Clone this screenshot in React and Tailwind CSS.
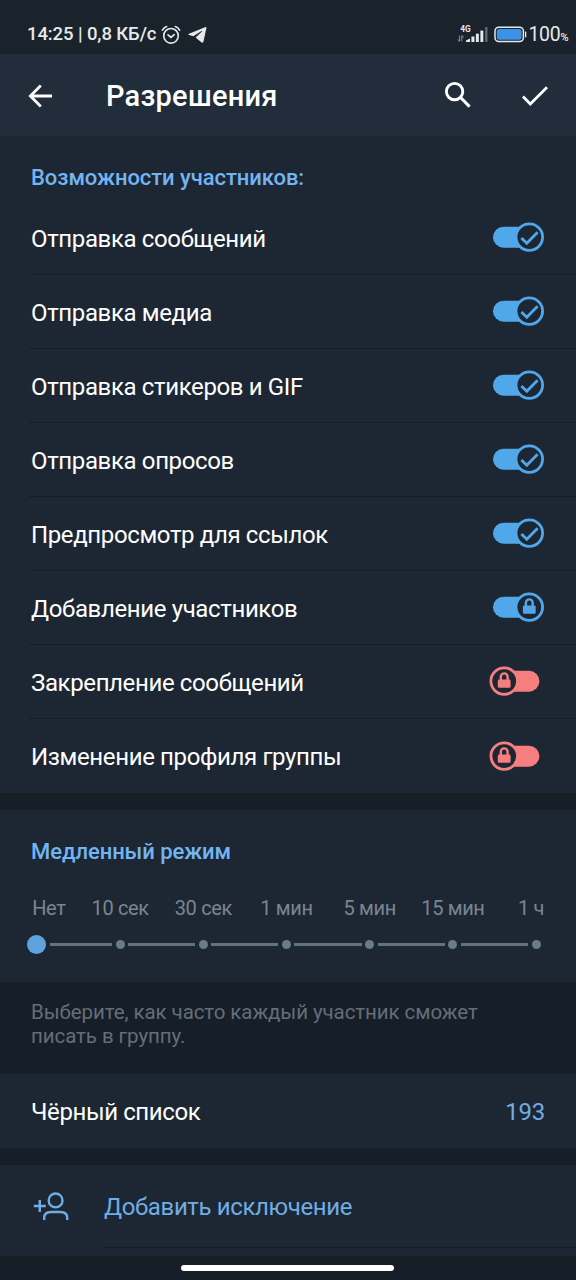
import { useState } from 'react'

const PERMISSIONS = [
  { id: 'messages', label: 'Отправка сообщений', on: true },
  { id: 'media', label: 'Отправка медиа', on: true },
  { id: 'stickers', label: 'Отправка стикеров и GIF', on: true },
  { id: 'polls', label: 'Отправка опросов', on: true },
  { id: 'links', label: 'Предпросмотр для ссылок', on: true },
  { id: 'invite', label: 'Добавление участников', on: true, locked: true },
  { id: 'pin', label: 'Закрепление сообщений', on: false, locked: true },
  { id: 'profile', label: 'Изменение профиля группы', on: false, locked: true },
]

const DELAYS = ['Нет', '10 сек', '30 сек', '1 мин', '5 мин', '15 мин', '1 ч']

const StatusBar = () => (
  <div className="flex h-[54px] items-center bg-[#1a232c] pt-[15px] pr-[8px] pl-[27px] text-[#e6e9ec]">
    <span className="text-[18.5px] leading-none font-medium tracking-[-0.1px] whitespace-nowrap">14:25 | 0,8 КБ/с</span>
    <svg className="ml-[5px] shrink-0" width="20" height="20" viewBox="0 0 20 20" fill="none" stroke="currentColor" strokeWidth="1.6" strokeLinecap="round">
      <circle cx="10" cy="10.8" r="7.3" />
      <path d="M1.4 5.2C2.4 3.4 3.8 2.2 5.6 1.5M18.6 5.2C17.6 3.4 16.2 2.2 14.4 1.5" />
      <path d="M7 9.8l3 2.6 3.2-2.8" />
    </svg>
    <svg className="ml-[7px] shrink-0" width="19" height="18" viewBox="0 0 19 18" fill="currentColor">
      <path d="M17.6 1L1 7.7c-.8.4-.8.9 0 1.2l4.3 1.3 8.2-5.2c.5-.3.9 0 .5.4L7.6 11.5l5.7 4.7c1 .8 1.9.6 2.2-.6L18.4 2c.2-.9-.2-1.2-.8-1z" />
    </svg>
    <svg className="ml-auto shrink-0" width="32" height="20" viewBox="0 0 32 20">
      <text x="3.2" y="7.3" fill="currentColor" fontSize="8.5" fontWeight="700" textLength="10.4" lengthAdjust="spacingAndGlyphs">4G</text>
      <g fill="none" stroke="#7f868d" strokeWidth="1.1">
        <path d="M2.6 10.5v6M0.8 14.5l1.8 2M4.8 16.5v-6M4.8 10.5l1.8 2" />
      </g>
      <g fill="currentColor">
        <path d="M9 17v-1.6l4-1.9V17z" />
        <rect x="14.4" y="11.5" width="3" height="5.5" />
        <rect x="18.9" y="8.7" width="2.9" height="8.3" />
        <rect x="23.4" y="5.6" width="2.9" height="11.4" />
        <rect x="28.1" y="2" width="2.4" height="15" opacity="0.35" />
      </g>
    </svg>
    <svg className="ml-[5px] shrink-0" width="33" height="18" viewBox="0 0 33 18">
      <rect x="1" y="1.2" width="28.4" height="14.4" rx="3.8" fill="none" stroke="currentColor" strokeWidth="1.5" />
      <rect x="2.8" y="3" width="24.8" height="10.8" rx="2.4" fill="#3a92e4" />
      <rect x="31" y="5.6" width="1.3" height="5.6" fill="currentColor" />
    </svg>
    <span className="ml-px flex items-baseline leading-none">
      <span className="text-[19.5px] tracking-[-0.3px]">100</span>
      <span className="text-[11px] font-medium tracking-[-0.5px]">%</span>
    </span>
  </div>
)

const Header = () => (
  <header className="flex h-[82px] items-center bg-[#212d3a] pr-[27px] pl-[27px] text-white">
    <svg className="mt-px shrink-0" width="26" height="26" viewBox="0 0 26 26" fill="none" stroke="currentColor" strokeWidth="2.8">
      <path d="M25 13H4M13.8 2.6L3.4 13l10.4 10.4" />
    </svg>
    <h1 className="mt-[2px] ml-[53px] text-[29px] leading-none font-medium tracking-[0.25px] whitespace-nowrap">Разрешения</h1>
    <svg className="ml-auto shrink-0" width="28" height="28" viewBox="0 0 28 28" fill="none" stroke="currentColor" strokeWidth="2.9">
      <circle cx="10.6" cy="10.6" r="8.2" />
      <path d="M16.4 16.4l9.2 9.2" />
    </svg>
    <svg className="mt-[2px] ml-[49px] shrink-0" width="28" height="22" viewBox="0 0 28 22" fill="none" stroke="currentColor" strokeWidth="2.8">
      <path d="M2 11.6l7.3 7.3L26 2.2" />
    </svg>
  </header>
)

const Lock = ({ cx }) => (
  <>
    <rect x={cx - 6.4} y="14.6" width="12.8" height="8.2" rx="1.4" fill="currentColor" />
    <path d={`M${cx - 3.4} 15v-3.2a3.4 3.4 0 0 1 6.8 0V15`} fill="none" stroke="currentColor" strokeWidth="2.4" />
  </>
)

const Toggle = ({ on, locked, label, onClick }) => {
  const cx = on ? 40.3 : 15.2
  return (
    <button
      role="switch"
      aria-checked={on}
      aria-label={label}
      onClick={onClick}
      className={`shrink-0 ${on ? 'text-[#50a8eb]' : 'text-[#f57f7f]'}`}
    >
      <svg className="block" width="56" height="32" viewBox="0 0 56 32">
        <rect x={on ? 4 : 9} y="5.7" width="41.4" height="21" rx="10.5" fill="currentColor" />
        <circle cx={cx} cy="16.1" r="13.3" fill="#1d2733" stroke="currentColor" strokeWidth="2.8" />
        {locked ? (
          <Lock cx={cx} />
        ) : (
          <path d="M32.4 17l5.4 5.2 10.8-11" fill="none" stroke="currentColor" strokeWidth="2.9" />
        )}
      </svg>
    </button>
  )
}

const SectionTitle = ({ children }) => (
  <h2 className="text-[22px] leading-[26px] font-medium tracking-[-0.07px] whitespace-nowrap text-[#72b5f2]">{children}</h2>
)

const DelaySlider = ({ value, onChange }) => (
  <>
    <div className="mt-[30px] flex pr-[32px] pl-[32.2px] text-[20px] leading-[26px] tracking-[-0.35px] whitespace-nowrap text-[#7b8590]">
      {DELAYS.map((delay, i) => {
        let place = 'w-[83.2px] text-center'
        if (i === 0) place = 'w-[46.4px]'
        if (i === DELAYS.length - 1) place = 'flex-1 text-right'
        return (
          <span key={delay} className={`shrink-0 ${place}`}>{delay}</span>
        )
      })}
    </div>
    <div className="mt-[13px] flex h-[20px] items-center pl-[32.4px]">
      {DELAYS.map((delay, i) => (
        <div key={delay} className={`flex shrink-0 items-center ${i > 0 ? 'w-[83.2px]' : ''}`}>
          {i > 0 && (
            <div
              className={`h-[3px] flex-1 bg-[#5f7383] ${i - 1 === value ? 'ml-[8.5px]' : 'ml-[3.5px]'} ${
                i === value ? 'mr-[8.5px]' : 'mr-[3.5px]'
              }`}
            />
          )}
          <button
            aria-label={delay}
            onClick={() => onChange(i)}
            className={`shrink-0 rounded-full ${
              i === value ? '-m-[5px] size-[19px] bg-[#5fa3de]' : 'size-[9px] bg-[#687c8b]'
            }`}
          />
        </div>
      ))}
    </div>
  </>
)

const App = () => {
  const [permissions, setPermissions] = useState(PERMISSIONS)
  const [delay, setDelay] = useState(0)

  const toggle = (id) => {
    setPermissions(permissions.map(p => (p.id === id && !p.locked ? { ...p, on: !p.on } : p)))
  }

  return (
    <div className="flex h-[1280px] w-[576px] flex-col overflow-hidden bg-[#161e27] font-['Roboto',sans-serif] text-white">
      <StatusBar />
      <Header />

      <section className="h-[657px] shrink-0 bg-[#1d2733]">
        <div className="h-[64.6px] pt-[29px] pl-[31px]">
          <SectionTitle>Возможности участников:</SectionTitle>
        </div>
        {permissions.map((p, i) => (
          <div key={p.id} className="pl-[29px]">
            <div
              className={`flex h-[74.05px] items-center justify-between pr-[31px] pl-[2px] ${
                i < permissions.length - 1 ? 'border-b border-[#141c25]' : ''
              }`}
            >
              <span className="pt-[3px] text-[24px] leading-[28px] tracking-[-0.37px] whitespace-nowrap">{p.label}</span>
              <Toggle on={p.on} locked={p.locked} label={p.label} onClick={() => toggle(p.id)} />
            </div>
          </div>
        ))}
      </section>

      <section className="mt-[17px] h-[172px] bg-[#1d2733] pt-[29px]">
        <div className="pl-[31px]">
          <SectionTitle>Медленный режим</SectionTitle>
        </div>
        <DelaySlider value={delay} onChange={setDelay} />
      </section>

      <p className="h-[92px] pt-[18px] pl-[31px] text-[20.5px] leading-[24px] tracking-[-0.08px] text-[#646e79]">
        Выберите, как часто каждый участник сможет
        <br />
        писать в группу.
      </p>

      <section className="flex h-[74px] items-center justify-between bg-[#1d2733] pt-[2px] pr-[31px] pl-[31px] text-[24px] tracking-[-0.39px]">
        <span>Чёрный список</span>
        <span className="tracking-[-0.2px] text-[#6fade3]">193</span>
      </section>

      <section className="mt-[17px] flex h-[91px] bg-[#1d2733] pl-[33px] text-[#6fade3]">
        <svg className="mt-[27px] shrink-0" width="36" height="30" viewBox="0 0 36 30" fill="none" stroke="currentColor" strokeWidth="2.4">
          <circle cx="22.6" cy="8.4" r="6.9" />
          <path d="M11.2 28v-2.2c0-4 3-5.8 6.8-5.8h9.4c3.8 0 6.8 1.8 6.8 5.8V28" />
          <path d="M0.8 14h12M6.8 8v12" />
        </svg>
        <div className="ml-[35px] h-[83px] flex-1 border-b border-[#141c25] pt-[28px] text-[24px] leading-[28px] tracking-[-0.38px] whitespace-nowrap">
          Добавить исключение
        </div>
      </section>

      <div className="flex flex-1 justify-center pt-[9px] pr-px">
        <div className="h-[6px] w-[213px] rounded-full bg-white" />
      </div>
    </div>
  )
}

export default App
